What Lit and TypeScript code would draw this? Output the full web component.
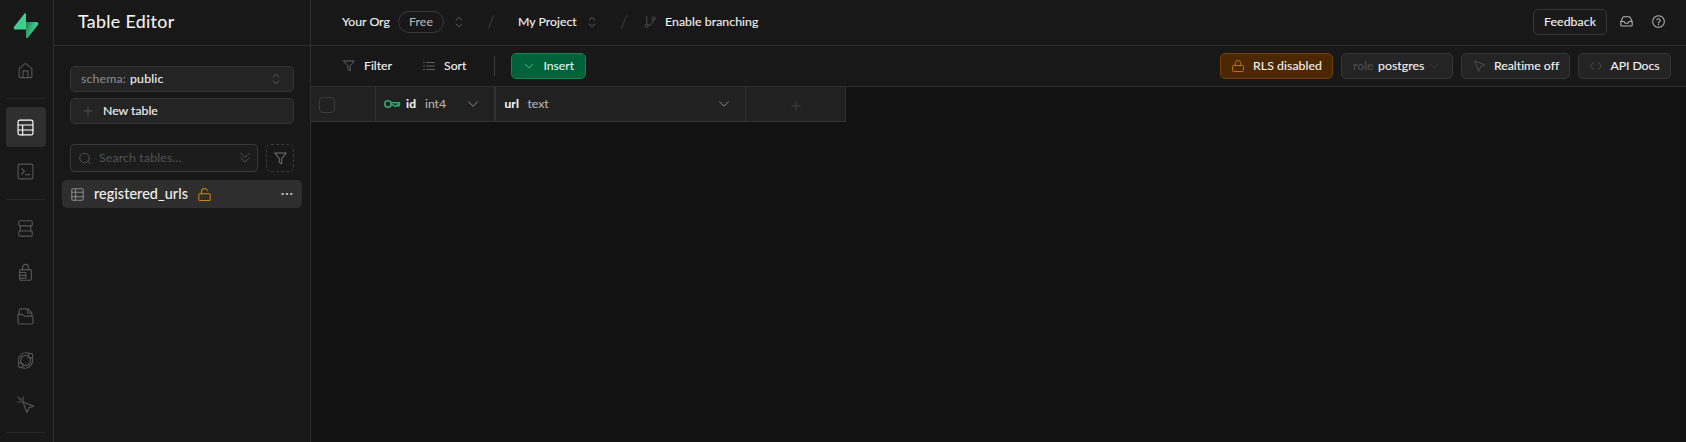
import {LitElement, html, css, svg} from 'lit';

// Label that tracks its letters so that they fill a given width exactly.
class UiLabel extends LitElement {
  static properties = {text: {}, w: {type: Number}, size: {type: Number}, weight: {type: Number}};
  declare text: string; declare w: number; declare size: number; declare weight: number;
  constructor() { super(); this.text = ''; this.w = 10; this.size = 12; this.weight = 400; }
  static styles = css`
    :host{display:block;flex:none;font-family:Lato,sans-serif}
    span{display:block;white-space:pre;line-height:1.4;-webkit-text-stroke:.1px currentColor}`;
  render() {
    const c = document.createElement('canvas').getContext('2d')!;
    c.font = `${this.weight} ${this.size}px Lato`;
    const ls = (this.w - c.measureText(this.text).width) / this.text.length;
    return html`<span style="width:${this.w}px;font-size:${this.size}px;font-weight:${this.weight};letter-spacing:${ls.toFixed(3)}px">${this.text}</span>`;
  }
}
customElements.define('ui-label', UiLabel);

const label = (text: string, w: number, size = 12.3, weight = 400) =>
  html`<ui-label .text=${text} .w=${w} .size=${size} .weight=${weight}></ui-label>`;

const shapes: Record<string, unknown> = {
  home: svg`<path d="M3 9.300 12 2l9 7.300v11a1.700 1.700 0 0 1-1.700 1.700H4.700A1.700 1.700 0 0 1 3 20.300z"/><path d="M8.500 22V12.500h7V22"/>`,
  table: svg`<rect x="1.500" y="1.500" width="21" height="21" rx="2.500"/><path d="M1.500 8.500h21M1.500 15.500h21M8 8.500v14"/>`,
  tableSmall: svg`<rect x="1.500" y="1.500" width="21" height="21" rx="2"/><path d="M1.500 8h21M1.500 16h21M8.500 1.500v21"/>`,
  terminal: svg`<rect x="1.500" y="1.500" width="21" height="21" rx="2.500"/><path d="m6.500 7.500 4 4.200-4 4.200M12 16.500h6"/>`,
  database: svg`<rect x="2.500" y="1" width="19" height="7.300" rx="1.500"/><path d="M4.700 8.300v7M19.300 8.300v7"/><rect x="2.500" y="15.500" width="19" height="7.300" rx="1.500"/>`,
  auth: svg`<rect x="3.700" y="8" width="16.600" height="15" rx="2"/><path d="M8 8V4.500a4 4 0 0 1 8 0V8M4 12h8.500v8H4M4 16h8.500"/>`,
  storage: svg`<path d="M3 9V3a1.700 1.700 0 0 1 1.700-1.700h10.500L21 7v3.500M15 1.500V7h6M1.500 9h6l3 2.500h10.500a1.600 1.600 0 0 1 1.600 1.600v7.500a2 2 0 0 1-2 2H3.500a2 2 0 0 1-2-2z"/>`,
  edge: svg`<circle cx="12" cy="12" r="7"/><circle cx="19" cy="5.200" r="3.300"/><circle cx="5" cy="18.800" r="3.300"/><path d="M16 1.600A11 11 0 0 0 2.800 16.200M8 22.400A11 11 0 0 0 21.200 7.800"/>`,
  realtime: svg`<path d="m8.500 8.500 15 5.800-6.500 2.200-3 6.800zM8.500 7V1M7 8.500H.800M6 6 1.500 1.500"/>`,
  chevrons: svg`<path d="m6.500 8 5.500-5.500L17.500 8M6.500 16l5.500 5.500 5.500-5.500"/>`,
  plus: svg`<path d="M12 2v20M2 12h20"/>`,
  search: svg`<circle cx="11" cy="12" r="9.500"/><path d="m18 19 5 5"/>`,
  downs: svg`<path d="m3.500 3 8.500 8L20.500 3M3.500 12l8.500 8 8.500-8"/>`,
  filter: svg`<path d="M1.500 2h21l-8.200 10v10l-4.600-3.200V12z"/>`,
  unlock: svg`<rect x="1.500" y="10.500" width="21" height="12.500" rx="2"/><path d="M6.500 10.500V6.500a5.500 5.500 0 0 1 10.800-1.500"/>`,
  lock: svg`<rect x="1" y="11" width="22" height="12" rx="2"/><path d="M6.500 11V6.500a5.500 5.500 0 0 1 11 0V11"/>`,
  dots: svg`<g fill="currentColor" stroke="none"><rect x="1" y="10" width="4.500" height="4.200" rx="1"/><rect x="9.600" y="10" width="4.500" height="4.200" rx="1"/><rect x="18.200" y="10" width="4.500" height="4.200" rx="1"/></g>`,
  branch: svg`<path d="M5.500 1v15.500M18.500 8.500c0 6-4 10-10 10.500"/><circle cx="19" cy="5" r="3.300"/><circle cx="5.500" cy="19.300" r="3.300"/>`,
  sort: svg`<path d="M7.500 5H23M7.500 12H23M7.500 19H23M1 5h2M1 12h2M1 19h2"/>`,
  down: svg`<path d="m3 7.500 9 9 9-9"/>`,
  cursor: svg`<path d="m2 2 20 7.500-8.500 3.500L9.500 22z"/>`,
  code: svg`<path d="m7.500 5-6.500 7 6.500 7M16.500 5l6.500 7-6.500 7"/>`,
  inbox: svg`<path d="M22.500 12h-6l-2 3.200h-5L7.500 12h-6M5.500 4 1.500 12v6.500a2 2 0 0 0 2 2h17a2 2 0 0 0 2-2V12l-4-8a2 2 0 0 0-1.500-.800H7a2 2 0 0 0-1.500.800z"/>`,
  help: svg`<circle cx="12" cy="12" r="10.800"/><path d="M8.800 9a3.300 3.300 0 0 1 6.400 1c0 2.200-3.200 2.600-3.200 4.600M12 17.300v.800"/>`,
  key: svg`<circle cx="6" cy="12" r="4.800"/><path d="M10.700 10h12.500v3.500l-1.200 1.500-1.700-2-1.600 2.300h-3l-1-1.800h-3.500"/>`,
  slash: svg`<path d="M16.500 1 7.500 23"/>`,
};
const icon = (name: string, cls = 's12') =>
  html`<svg class="ic ${cls}" viewBox="0 0 24 24" fill="none" stroke="currentColor" stroke-linecap="round" stroke-linejoin="round">${shapes[name]}</svg>`;

class AppRoot extends LitElement {
  static styles = css`
    *{box-sizing:border-box}
    :host{display:flex;height:442px;width:1686px;background:#121212;color:#f4f4f4;overflow:hidden}
    .ic{display:block;flex:none;overflow:visible;stroke-width:2}
    .s18{width:17px;height:17px;stroke-width:1.6}
    .s16{width:16px;height:16px;stroke-width:2.3}.s14{width:14px;height:14px;stroke-width:1.7}
    .s13{width:13px;height:13px;stroke-width:1.9}.s12{width:12px;height:12px}.s10{width:10px;height:10px;stroke-width:2.2}
    .rail{width:54px;flex:none;background:#181818;border-right:1px solid #2e2e2e;display:flex;flex-direction:column;padding:11px 7px 0 6px;color:#555}
    .logo{height:28px;display:flex;justify-content:center}
    .item{height:40px;width:40px;border-radius:4px;display:flex;align-items:center;justify-content:center;margin-bottom:4px;flex:none;padding:1px 1px 0 0}
    .first{margin-top:11px}
    .on{background:#2f2f2f;color:#fff}
    .rule{height:1px;background:#282828;width:39px;margin:4px 0 8px;flex:none}
    .side{width:257px;flex:none;background:#181818;border-right:1px solid #2e2e2e}
    .title{height:46px;border-bottom:1px solid #2e2e2e;padding:0 0 2px 24px;display:flex;align-items:center}
    .panel{padding:20px 8px 0}
    .box{height:26px;border:1px solid #363636;border-radius:5px;background:#242424;display:flex;align-items:center}
    .panel .box{margin:0 8px 6px;padding:0 11px 0 10px}
    .dim{color:#898989}.faint{color:#4d4d4d}.soft{color:#b4b4b4}
    .g5{gap:4px}.grow{flex:1}
    .new{gap:10px}.panel .new{padding-left:12px}
    .find{display:flex;margin:20px 8px 8px;gap:8px}
    .input{width:188px;height:28px;border:1px solid #393939;border-radius:4px;background:#1c1c1c;display:flex;align-items:center;padding:0 6px 0 8px;gap:8px;color:#505050}
    .dash{width:28px;height:28px;border:1px dashed #3a3a3a;border-radius:5px;display:flex;align-items:center;justify-content:center;color:#707070}
    .row{height:28px;border-radius:5px;background:#2e2e2e;display:flex;align-items:center;padding:0 9px}
    .row ui-label{margin:0 9.500px 0 10px}
    .amber{color:#cf8608}
    .main{flex:1;min-width:0}
    .top{height:46px;border-bottom:1px solid #2e2e2e;background:#181818;display:flex;align-items:center;padding:0 21px 2px 31px}
    .pill{height:22px;width:46px;border:1px solid #3a3a3a;border-radius:11px;display:flex;align-items:center;justify-content:center;margin:0 9px 0 8px;color:#b4b4b4}
    .sl{margin:0 20px 0 19px;color:#3c3c3c;stroke-width:1.700}
    .last{margin-right:13px}
    .mid{color:#606060}
    .chev{margin-left:9px}
    .btn{background:#1a1a1a;padding:0 10px;margin-right:13px}
    .inbox{margin-right:19px}
    .bar{height:41px;border-bottom:1px solid #2e2e2e;background:#181818;display:flex;align-items:center;padding:0 15px 0 32px}
    .sep{width:1px;height:20px;background:#3a3a3a;margin:0 16px 0 27px}
    .ins{background:#006239;border-color:#128353;width:75px;padding:0 0 0 12px;gap:10px;color:#dff5ea}
    .ins .ic{color:#4ec491}
    .bar .box{flex:none}
    .rls{background:#4b2800;border-color:#6e4106;width:113px;padding-left:11px;gap:9px;margin-right:8px}
    .rls .amber{color:#b87404}
    .role{width:112px;padding-left:11px;gap:4.500px;margin-right:8px}
    .role .down{color:#3c3c3c}
    .rt{width:109px;padding-left:12px;gap:8px;margin-right:8px}
    .api{width:93px;padding-left:11px;gap:8.500px}
    .f{margin-right:9px}.gap{width:31px}
    .head{display:flex;width:535px;height:35px;background:#212121}
    .cell{border-right:1px solid #333;border-bottom:1px solid #333;display:flex;align-items:center;flex:none}
    .c1{width:65px;padding-left:8px}.c2{width:120px;padding-left:8px;border-right-width:2px}.c3{width:250px;padding:0 15px 0 8.500px}.c4{width:100px;justify-content:center;padding-top:3px;color:#444}
    .check{width:16px;height:16px;border:1px solid #3a3a3a;border-radius:4px;margin-top:2px}
    .green{color:#34a872;margin-right:6px}
    .id{margin-right:8.500px}
    .c2 .down{margin-left:21px}
  `;
  render() {
    const item = (n: string, c = '') => html`<div class="item ${c}">${icon(n, 's18')}</div>`;
    return html`
    <nav class="rail">
      <div class="logo"><svg width="26" height="28" viewBox="0 0 26 28">
        <defs><linearGradient id="g" x1="0" y1="0" x2="1" y2=".5"><stop stop-color="#217a52"/><stop offset=".7" stop-color="#3ccb89"/></linearGradient></defs>
        <path fill="url(#g)" d="M13 11h10.500c1.600 0 2.400 1.500 1.500 2.800L14.700 26.700c-.600.800-1.700.400-1.700-.500z"/>
        <path fill="#3fcf8e" d="M13 18.500H2.300C.900 18.500.200 17 1.100 15.800L11.300 2.700c.600-.800 1.700-.400 1.700.500z"/></svg></div>
      ${item('home', 'first')}
      <div class="rule"></div>
      ${item('table', 'on')}${item('terminal')}
      <div class="rule"></div>
      ${item('database')}${item('auth')}${item('storage')}${item('edge')}${item('realtime')}
      <div class="rule"></div>
    </nav>
    <aside class="side">
      <div class="title">${label('Table Editor', 96.5, 17.8)}</div>
      <div class="panel">
        <div class="box g5"><span class="dim">${label('schema:', 45)}</span>${label('public', 33.5)}<span class="grow"></span><span class="mid">${icon('chevrons')}</span></div>
        <div class="box new"><span class="faint">${icon('plus', 's10')}</span>${label('New table', 55)}</div>
        <div class="find">
          <div class="input">${icon('search')}${label('Search tables...', 82.5)}<span class="grow"></span>${icon('downs')}</div>
          <div class="dash">${icon('filter', 's13')}</div>
        </div>
        <div class="row"><span class="dim">${icon('tableSmall', 's13')}</span>${label('registered_urls', 94, 14.4)}<span class="amber">${icon('unlock', 's13')}</span><span class="grow"></span><span class="soft">${icon('dots')}</span></div>
      </div>
    </aside>
    <main class="main">
      <header class="top">
        ${label('Your Org', 48)}<span class="pill">${label('Free', 24)}</span><span class="mid">${icon('chevrons')}</span>
        ${icon('slash', 's14 sl')}
        ${label('My Project', 59)}<span class="mid chev">${icon('chevrons')}</span>
        ${icon('slash', 's14 sl last')}
        <span class="faint f">${icon('branch')}</span>${label('Enable branching', 93.5)}
        <span class="grow"></span>
        <div class="box btn">${label('Feedback', 52)}</div>
        <span class="soft inbox">${icon('inbox', 's13')}</span>
        <span class="soft">${icon('help', 's13')}</span>
      </header>
      <div class="bar">
        <span class="mid f">${icon('filter')}</span>${label('Filter', 28)}<span class="gap"></span>
        <span class="mid f">${icon('sort')}</span>${label('Sort', 22.5)}
        <span class="sep"></span>
        <div class="box ins">${icon('down', 's10')}${label('Insert', 30.5)}</div>
        <span class="grow"></span>
        <div class="box rls"><span class="amber">${icon('lock')}</span>${label('RLS disabled', 69)}</div>
        <div class="box role"><span class="faint">${label('role', 20.5)}</span>${label('postgres', 46.5)}<span class="down">${icon('down', 's10')}</span></div>
        <div class="box rt"><span class="faint">${icon('cursor')}</span>${label('Realtime off', 65)}</div>
        <div class="box api"><span class="faint">${icon('code')}</span>${label('API Docs', 49)}</div>
      </div>
      <div class="head">
        <div class="cell c1"><span class="check"></span></div>
        <div class="cell c2"><span class="green">${icon('key', 's16')}</span><span class="id">${label('id', 10.5, 12, 700)}</span><span class="soft">${label('int4', 21)}</span><span class="dim down">${icon('down')}</span></div>
        <div class="cell c3"><span class="id">${label('url', 14.5, 12, 700)}</span><span class="soft">${label('text', 21)}</span><span class="grow"></span><span class="dim">${icon('down')}</span></div>
        <div class="cell c4">${icon('plus', 's10')}</div>
      </div>
    </main>`;
  }
}
customElements.define('app-root', AppRoot);
